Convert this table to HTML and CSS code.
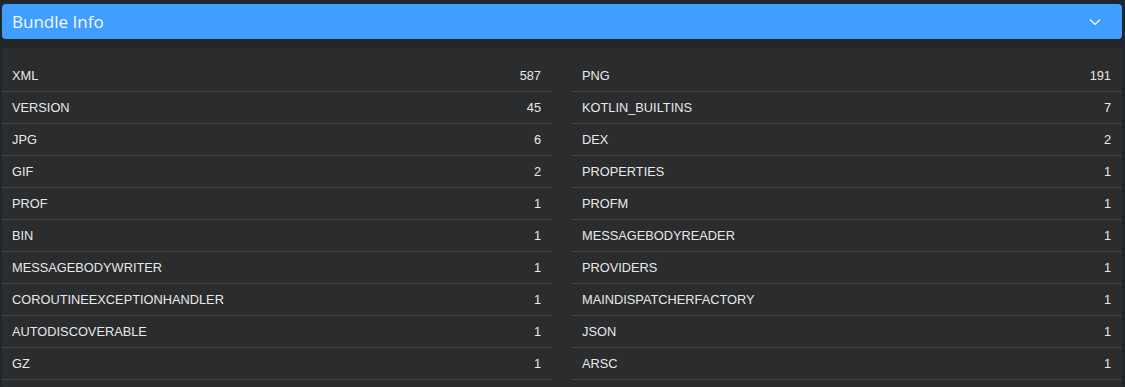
FILE: index.html
```html
<!DOCTYPE html>
<html>
<head>
<meta charset="utf-8">
<link rel="stylesheet" href="styles.css">
</head>
<body>
<div class="wrap">
  <div class="header">
    <span class="title">Bundle Info</span>
    <svg class="chev" width="12" height="8" viewBox="0 0 12 8"><path d="M1 1.5 L6 6.5 L11 1.5" fill="none" stroke="#fff" stroke-width="1.2"/></svg>
  </div>
  <div class="panel">
    <div class="col">
      <div class="row"><span>XML</span><span>587</span></div>
      <div class="row"><span>VERSION</span><span>45</span></div>
      <div class="row"><span>JPG</span><span>6</span></div>
      <div class="row"><span>GIF</span><span>2</span></div>
      <div class="row"><span>PROF</span><span>1</span></div>
      <div class="row"><span>BIN</span><span>1</span></div>
      <div class="row"><span>MESSAGEBODYWRITER</span><span>1</span></div>
      <div class="row"><span>COROUTINEEXCEPTIONHANDLER</span><span>1</span></div>
      <div class="row"><span>AUTODISCOVERABLE</span><span>1</span></div>
      <div class="row"><span>GZ</span><span>1</span></div>
    </div>
    <div class="col">
      <div class="row"><span>PNG</span><span>191</span></div>
      <div class="row"><span>KOTLIN_BUILTINS</span><span>7</span></div>
      <div class="row"><span>DEX</span><span>2</span></div>
      <div class="row"><span>PROPERTIES</span><span>1</span></div>
      <div class="row"><span>PROFM</span><span>1</span></div>
      <div class="row"><span>MESSAGEBODYREADER</span><span>1</span></div>
      <div class="row"><span>PROVIDERS</span><span>1</span></div>
      <div class="row"><span>MAINDISPATCHERFACTORY</span><span>1</span></div>
      <div class="row"><span>JSON</span><span>1</span></div>
      <div class="row"><span>ARSC</span><span>1</span></div>
    </div>
  </div>
</div>
</body>
</html>
```
FILE: styles.css
```css
html, body {
  margin: 0;
  padding: 0;
  background: #22262a;
  height: 387px;
  overflow: hidden;
}
.wrap {
  padding: 4px 3px 0 2px;
}
.header {
  height: 35px;
  background: #409eff;
  border-radius: 4px;
  display: flex;
  align-items: center;
  justify-content: space-between;
  padding: 0 21px 0 10px;
}
.title {
  font-family: "Open Sans", sans-serif;
  font-size: 17px;
  color: #f4f8ff;
}
.chev {
  display: block;
}
.panel {
  margin-top: 9px;
  background: #2b2c2e;
  padding: 12px 0 8px 0;
  display: grid;
  grid-template-columns: 1fr 1fr;
  column-gap: 20px;
}
.row {
  height: 31px;
  border-bottom: 1px solid #45474a;
  display: flex;
  align-items: center;
  justify-content: space-between;
  padding: 0 11px 0 10px;
  font-family: "Liberation Sans", Arial, sans-serif;
  font-size: 12.8px;
  color: #e8e8e8;
}
```
